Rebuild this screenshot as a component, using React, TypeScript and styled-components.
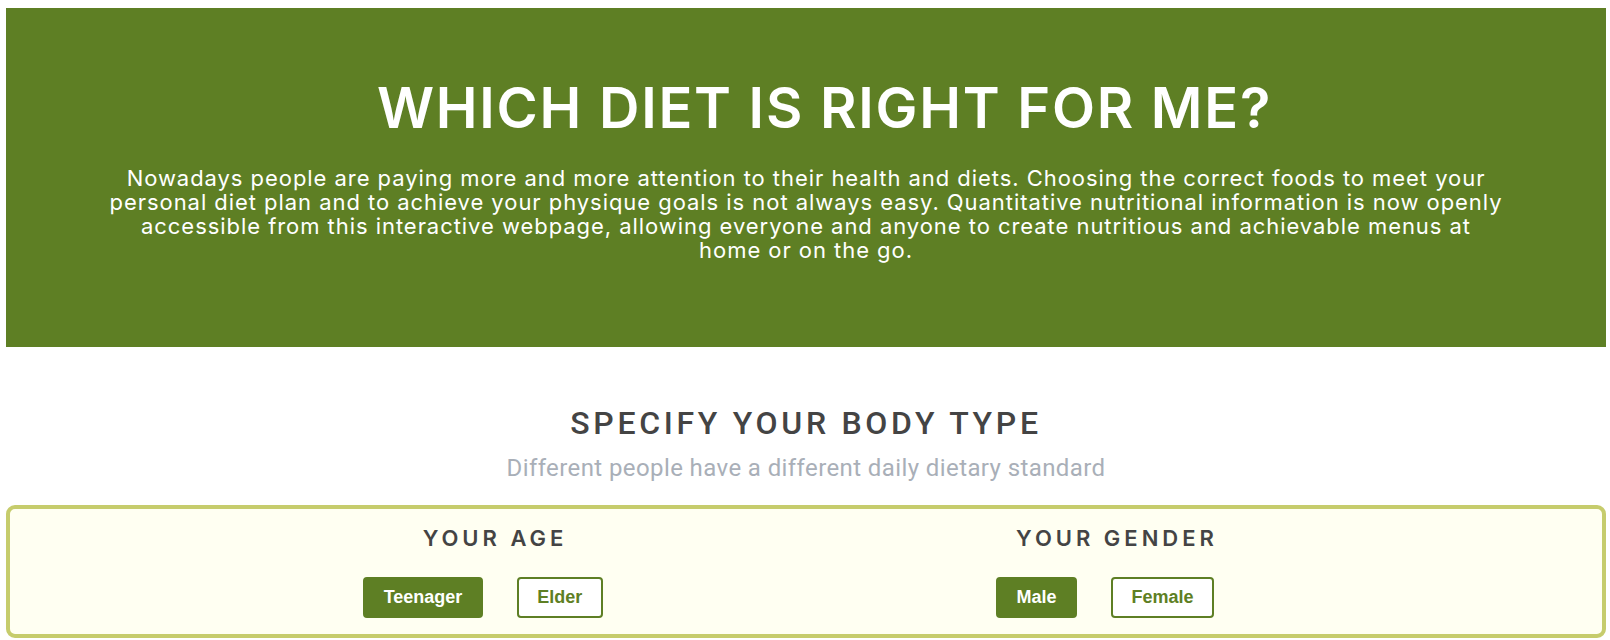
import React, { useState } from "react";
import styled, { createGlobalStyle } from "styled-components";

const Global = createGlobalStyle`
  html, body { background: #ffffff; }
  body {
    margin: 8px 4px 0 6px;
    font-family: Inter, "Liberation Sans", Arial, sans-serif;
  }
  * { box-sizing: border-box; }
`;

const Hero = styled.header`
  background: #5e7f24;
  color: #ffffff;
  height: 339px;
  padding: 66px 40px 0;
  text-align: center;
`;

const HeroTitle = styled.h1`
  margin: 0;
  padding-left: 37px;
  font-family: Inter, "Liberation Sans", sans-serif;
  font-weight: 600;
  font-size: 56px;
  line-height: 68px;
  letter-spacing: 1.75px;
`;

const HeroText = styled.p`
  margin: 24px auto 0;
  max-width: 1393px;
  font-family: Inter, "Liberation Sans", sans-serif;
  font-size: 22px;
  line-height: 24px;
  letter-spacing: 0.95px;
`;

const Section = styled.section`
  text-align: center;
  padding-top: 58px;
`;

const SectionTitle = styled.h2`
  margin: 0;
  font-family: Roboto, "Liberation Sans", sans-serif;
  font-weight: 500;
  font-size: 32px;
  line-height: 36px;
  letter-spacing: 3.7px;
  color: #444444;
`;

const SectionSub = styled.p`
  margin: 13px 0 0;
  font-family: Roboto, "Liberation Sans", sans-serif;
  font-size: 24px;
  line-height: 28px;
  letter-spacing: 0.4px;
  color: #a9afb8;
`;

const Panel = styled.div`
  margin-top: 23px;
  border: 4px solid #c6cc6c;
  border-radius: 9px;
  background: #fffff2;
  padding: 14px 0 16px;
`;

const Columns = styled.div`
  display: grid;
  grid-template-columns: 1fr 1fr;
  max-width: 1244px;
  margin: 0 auto;
`;

const Group = styled.div`
  display: flex;
  flex-direction: column;
  align-items: center;
`;

const GroupTitle = styled.h3`
  margin: 0;
  font-family: Inter, "Liberation Sans", sans-serif;
  font-weight: 600;
  font-size: 22px;
  line-height: 30px;
  letter-spacing: 4px;
  color: #444444;
`;

const Buttons = styled.div`
  display: flex;
  gap: 10px;
  margin-top: 24px;
`;

const Choice = styled.button<{ $active: boolean }>`
  height: 41px;
  margin-right: 24px;
  padding: 0 18.5px;
  border: 2px solid #5e7f24;
  border-radius: 4px;
  background: ${(p) => (p.$active ? "#5e7f24" : "#ffffff")};
  color: ${(p) => (p.$active ? "#ffffff" : "#5e7f24")};
  font-family: "Liberation Sans", Arial, sans-serif;
  font-weight: 700;
  font-size: 18px;
  cursor: pointer;
`;

function ChoiceGroup({ title, options }: { title: string; options: string[] }) {
  const [sel, setSel] = useState(options[0]);
  return (
    <Group>
      <GroupTitle>{title}</GroupTitle>
      <Buttons>
        {options.map((o) => (
          <Choice key={o} $active={sel === o} onClick={() => setSel(o)}>
            {o}
          </Choice>
        ))}
      </Buttons>
    </Group>
  );
}

export default function App() {
  return (
    <>
      <Global />
      <Hero>
        <HeroTitle>WHICH DIET IS RIGHT FOR ME?</HeroTitle>
        <HeroText>
          Nowadays people are paying more and more attention to their health and diets. Choosing the
          correct foods to meet your personal diet plan and to achieve your physique goals is not always
          easy. Quantitative nutritional information is now openly accessible from this interactive
          webpage, allowing everyone and anyone to create nutritious and achievable menus at home or on
          the go.
        </HeroText>
      </Hero>
      <Section>
        <SectionTitle>SPECIFY YOUR BODY TYPE</SectionTitle>
        <SectionSub>Different people have a different daily dietary standard</SectionSub>
        <Panel>
          <Columns>
            <ChoiceGroup title="YOUR AGE" options={["Teenager", "Elder"]} />
            <ChoiceGroup title="YOUR GENDER" options={["Male", "Female"]} />
          </Columns>
        </Panel>
      </Section>
    </>
  );
}
